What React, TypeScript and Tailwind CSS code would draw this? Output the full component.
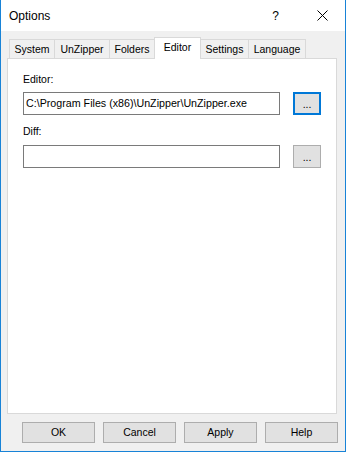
import React from "react";

type TabDef = { label: string; w: number; selected?: boolean; noLeft?: boolean; right?: boolean };

const tabs: TabDef[] = [
  { label: "System", w: 45 },
  { label: "UnZipper", w: 55 },
  { label: "Folders", w: 45 },
  { label: "Editor", w: 47, selected: true },
  { label: "Settings", w: 47, noLeft: true },
  { label: "Language", w: 58, right: true },
];

function Tab({ t }: { t: TabDef }) {
  if (t.selected) {
    return (
      <div
        className="relative z-10 -mb-px h-[22px] bg-white border-t border-x border-[#d9d9d9] flex items-start justify-center pt-[3px] leading-[13px]"
        style={{ width: t.w }}
      >
        {t.label}
      </div>
    );
  }
  return (
    <div
      className={
        "h-[19px] bg-[#f0f0f0] border-t border-[#d9d9d9] flex items-center justify-center leading-[13px] pt-[1px] " +
        (t.noLeft ? "" : "border-l ") +
        (t.right ? "border-r" : "")
      }
      style={{ width: t.w }}
    >
      {t.label}
    </div>
  );
}

export default function App() {
  return (
    <div className="w-[346px] h-[452px] bg-[#f0f0f0] border-x border-b border-[#1883d7] flex flex-col font-['Liberation_Sans',Arial,sans-serif] text-[10.5px] text-black overflow-hidden">
      <div className="h-[31px] shrink-0 bg-white flex items-center pl-[8px] pr-[17px]">
        <span className="text-[12px] leading-[14px]">Options</span>
        <span className="ml-auto mr-[38px] text-[12px] leading-[14px]">?</span>
        <svg width="11" height="11" viewBox="0 0 11 11" className="block">
          <path d="M0.5 0.5 L10.5 10.5 M10.5 0.5 L0.5 10.5" stroke="#000" strokeWidth="1" fill="none" />
        </svg>
      </div>

      <div className="ml-[6px] mt-[6px] w-[330px] shrink-0">
        <div className="flex items-end h-[21px] ml-[2px]">
          {tabs.map((t) => (
            <Tab key={t.label} t={t} />
          ))}
        </div>
        <div className="h-[356px] bg-white border border-[#d9d9d9] px-[15px] pt-[14px]">
          <div className="h-[13px] leading-[13px]">Editor:</div>
          <div className="mt-[6px] flex items-center">
            <div className="w-[258px] h-[23px] border border-[#7a7a7a] bg-white flex items-center pl-[2px] text-[10.7px] leading-[13px] whitespace-nowrap overflow-hidden">
              C:\Program Files (x86)\UnZipper\UnZipper.exe
            </div>
            <div className="ml-[13px] w-[28px] h-[23px] bg-[#e1e1e1] border-2 border-[#0078d7] flex items-center justify-center leading-[13px] pt-[2px]">
              ...
            </div>
          </div>
          <div className="mt-[10px] h-[13px] leading-[13px]">Diff:</div>
          <div className="mt-[7px] flex items-center">
            <div className="w-[258px] h-[23px] border border-[#7a7a7a] bg-white" />
            <div className="ml-[13px] w-[28px] h-[23px] bg-[#e1e1e1] border border-[#adadad] flex items-center justify-center leading-[13px] pt-[2px]">
              ...
            </div>
          </div>
        </div>
      </div>

      <div className="mt-[8px] ml-[21px] flex gap-[8px]">
        {["OK", "Cancel", "Apply", "Help"].map((b) => (
          <div
            key={b}
            className="w-[73px] h-[21px] bg-[#e1e1e1] border border-[#adadad] flex items-center justify-center leading-[13px]"
          >
            {b}
          </div>
        ))}
      </div>
    </div>
  );
}
